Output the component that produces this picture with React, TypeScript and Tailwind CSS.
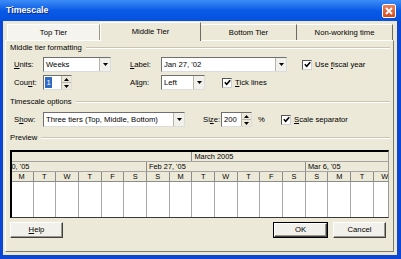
import React from "react";

const Arrow = ({ up = false }: { up?: boolean }) => (
  <svg width="5" height="3" viewBox="0 0 5 3">
    {up ? <path d="M0 3h5L2.5 0z" fill="#000" /> : <path d="M0 0h5L2.5 3z" fill="#000" />}
  </svg>
);

const Combo = ({ w, text }: { w: string; text: string }) => (
  <div className={`flex h-[15px] shrink-0 bg-white border border-t-[#6f6f6f] border-l-[#6f6f6f] border-r-[#dcdcdc] border-b-[#dcdcdc] ${w}`}>
    <div className="flex-1 pl-[2px] leading-[13px] whitespace-nowrap overflow-hidden">{text}</div>
    <div className="w-[11px] h-full bg-[#F1F0EA] border-l border-l-[#b8b5a8] flex items-center justify-center">
      <Arrow />
    </div>
  </div>
);

const Spin = ({ w, children }: { w: string; children: React.ReactNode }) => (
  <div className={`flex h-[15px] shrink-0 bg-white border border-t-[#6f6f6f] border-l-[#6f6f6f] border-r-[#dcdcdc] border-b-[#dcdcdc] ${w}`}>
    <div className="flex-1 pl-[1px] leading-[13px] flex items-center">{children}</div>
    <div className="w-[10px] h-full flex flex-col bg-[#ECE9D8] border-l border-l-[#b8b5a8]">
      <div className="flex-1 flex items-center justify-center border-b border-b-[#b8b5a8]">
        <Arrow up />
      </div>
      <div className="flex-1 flex items-center justify-center">
        <Arrow />
      </div>
    </div>
  </div>
);

const Check = ({ cls }: { cls: string }) => (
  <div className={`w-[10px] h-[10px] shrink-0 bg-white border border-t-[#555] border-l-[#555] border-r-[#cfcfcf] border-b-[#cfcfcf] flex items-center justify-center ${cls}`}>
    <svg width="7" height="7" viewBox="0 0 7 7">
      <path d="M0.8 3.2 L2.7 5.2 L6.2 1.2" stroke="#000" strokeWidth="1.6" fill="none" />
    </svg>
  </div>
);

const Header = ({ text, cls }: { text: string; cls: string }) => (
  <div className={`flex items-center h-[10px] ml-[4px] mr-[3px] ${cls}`}>
    <span className="leading-[10px] whitespace-nowrap">{text}</span>
    <div className="flex-1 ml-[4px] h-[2px] border-t border-t-[#c9c6b6] border-b border-b-white" />
  </div>
);

const U = ({ children }: { children: React.ReactNode }) => (
  <span className="underline underline-offset-[1px] decoration-[0.8px]">{children}</span>
);

const days = ["M", "T", "W", "T", "F", "S", "S", "M", "T", "W", "T", "F", "S", "S", "M", "T", "W"];
const weeks = ["Feb 20, '05", "Feb 27, '05", "Mar 6, '05"];

export default function App() {
  return (
    <div className="w-[401px] h-[259px] bg-[#0b47d6] flex flex-col font-['Liberation_Sans',Arial,sans-serif] text-[7.7px] text-black overflow-hidden">
      {/* Title bar */}
      <div className="h-[21px] shrink-0 flex items-center bg-gradient-to-b from-[#3d8df7] via-[#0a5ae6] to-[#0550df] pl-[6px] pr-[5px]">
        <span className="text-white font-bold text-[8.8px] [text-shadow:1px_1px_0_#0a2a8a]">Timescale</span>
        <div className="flex-1" />
        <div className="w-[14px] h-[14px] mt-[1px] rounded-[2px] border border-white bg-gradient-to-b from-[#e8825f] to-[#d64a1c] flex items-center justify-center">
          <svg width="8" height="8" viewBox="0 0 8 8">
            <path d="M1 1L7 7M7 1L1 7" stroke="#fff" strokeWidth="1.8" />
          </svg>
        </div>
      </div>

      {/* Body */}
      <div className="flex-1 ml-[3px] mr-[4px] mb-[4px] bg-[#ECE9D8] flex flex-col">
        {/* Tabs */}
        <div className="h-[19px] mt-[1px] pl-[4px] flex items-start">
          <div className="w-[93px] h-[16px] mt-[2px] bg-[#F5F4EE] border-t border-l border-white border-r border-r-[#9a978a] flex items-center justify-center">
            Top Tier
          </div>
          <div className="relative z-10 w-[101px] h-[19px] bg-[#ECE9D8] border-t border-l border-white border-r border-r-[#6e6c62] flex items-center justify-center pb-[1px]">
            Middle Tier
          </div>
          <div className="w-[96px] h-[16px] mt-[2px] bg-[#ECE9D8] border-t border-t-white border-r border-r-[#6e6c62] flex items-center justify-center">
            Bottom Tier
          </div>
          <div className="w-[96px] h-[16px] mt-[2px] bg-[#ECE9D8] border-t border-t-white border-r border-r-[#6e6c62] flex items-center justify-center">
            Non-working time
          </div>
        </div>

        {/* Panel */}
        <div className="-mt-[1px] ml-[2px] w-[389px] h-[212px] border-t border-l border-white border-r border-b border-r-[#7d7a6e] border-b-[#7d7a6e] flex flex-col">
          <Header text="Middle tier formatting" cls="mt-[2px]" />

          {/* Units row */}
          <div className="flex items-center h-[15px] mt-[4px]">
            <span className="ml-[8px] w-[29px] shrink-0"><U>U</U>nits:</span>
            <Combo w="w-[68px]" text="Weeks" />
            <span className="ml-[19px] w-[31px] shrink-0"><U>L</U>abel:</span>
            <Combo w="w-[126px]" text="Jan 27, '02" />
            <Check cls="ml-[15px]" />
            <span className="ml-[3px] whitespace-nowrap">Use <U>f</U>iscal year</span>
          </div>

          {/* Count row */}
          <div className="flex items-center h-[15px] mt-[3px]">
            <span className="ml-[8px] w-[29px] shrink-0">Cou<U>n</U>t:</span>
            <Spin w="w-[29px]">
              <span className="bg-[#316AC5] text-white px-[1.5px] leading-[11px]">1</span>
            </Spin>
            <span className="ml-[58px] w-[31px] shrink-0">Al<U>i</U>gn:</span>
            <Combo w="w-[44px]" text="Left" />
            <Check cls="ml-[17px]" />
            <span className="ml-[3px] whitespace-nowrap"><U>T</U>ick lines</span>
          </div>

          <Header text="Timescale options" cls="mt-[7px]" />

          {/* Show row */}
          <div className="flex items-center h-[15px] mt-[5px]">
            <span className="ml-[8px] w-[29px] shrink-0">S<U>h</U>ow:</span>
            <Combo w="w-[142px]" text="Three tiers (Top, Middle, Bottom)" />
            <span className="ml-[18px] w-[18px] shrink-0">Si<U>z</U>e:</span>
            <Spin w="w-[31px]">
              <span className="pl-[1px]">200</span>
            </Spin>
            <span className="ml-[6px] w-[7px] shrink-0">%</span>
            <Check cls="ml-[16px]" />
            <span className="ml-[3px] whitespace-nowrap"><U>S</U>cale separator</span>
          </div>

          <Header text="Preview" cls="mt-[6px]" />

          {/* Preview grid */}
          <div className="mt-[7px] ml-[4px] w-[379px] h-[68px] shrink-0 bg-white border-t-2 border-l-2 border-t-black border-l-black border-r border-b border-r-[#9a9a9a] border-b-[#3a3a3a] overflow-hidden flex flex-col text-[7.4px]">
            <div className="h-[10px] shrink-0 flex bg-[#ECE9D8] border-b border-b-[#a4a4a4]">
              <div className="w-[180.4px] shrink-0 border-r border-r-[#8c8c8c]" />
              <div className="shrink-0 pl-[2px] leading-[9px] whitespace-nowrap">March 2005</div>
            </div>
            <div className="h-[10px] shrink-0 flex bg-[#ECE9D8] border-b border-b-[#a4a4a4] -ml-[23.9px]">
              {weeks.map((w, i) => (
                <div
                  key={i}
                  className={`w-[158.9px] shrink-0 border-r border-r-[#8c8c8c] leading-[9px] whitespace-nowrap ${i === 0 ? "pl-[4.5px]" : "pl-[2px]"}`}
                >
                  {w}
                </div>
              ))}
            </div>
            <div className="h-[10px] shrink-0 flex bg-[#ECE9D8] border-b border-b-[#8c8c8c] -ml-[1.2px]">
              {days.map((d, i) => (
                <div key={i} className="w-[22.7px] shrink-0 border-r border-r-[#8c8c8c] text-center leading-[9px]">
                  {d}
                </div>
              ))}
            </div>
            <div className="flex-1 flex -ml-[1.2px]">
              {days.map((_, i) => (
                <div key={i} className="w-[22.7px] shrink-0 border-r border-r-[#a8a8a8]" />
              ))}
            </div>
          </div>

          {/* Buttons */}
          <div className="flex h-[16px] mt-[4px] mr-[7px]">
            <div className="ml-[4px] w-[53px] h-[16px] flex items-center justify-center bg-[#F1F0EA] border-t border-l border-white border-r border-b border-r-[#404040] border-b-[#404040] shadow-[inset_-1px_-1px_0_#9a988c]">
              <U>H</U>elp
            </div>
            <div className="flex-1" />
            <div className="w-[55px] h-[16px] border border-black flex">
              <div className="flex-1 flex items-center justify-center bg-[#F1F0EA] border-t border-l border-white border-r border-b border-r-[#404040] border-b-[#404040] shadow-[inset_-1px_-1px_0_#9a988c]">
                OK
              </div>
            </div>
            <div className="ml-[5px] w-[53px] h-[16px] flex items-center justify-center bg-[#F1F0EA] border-t border-l border-white border-r border-b border-r-[#404040] border-b-[#404040] shadow-[inset_-1px_-1px_0_#9a988c]">
              Cancel
            </div>
          </div>
        </div>
      </div>
    </div>
  );
}
